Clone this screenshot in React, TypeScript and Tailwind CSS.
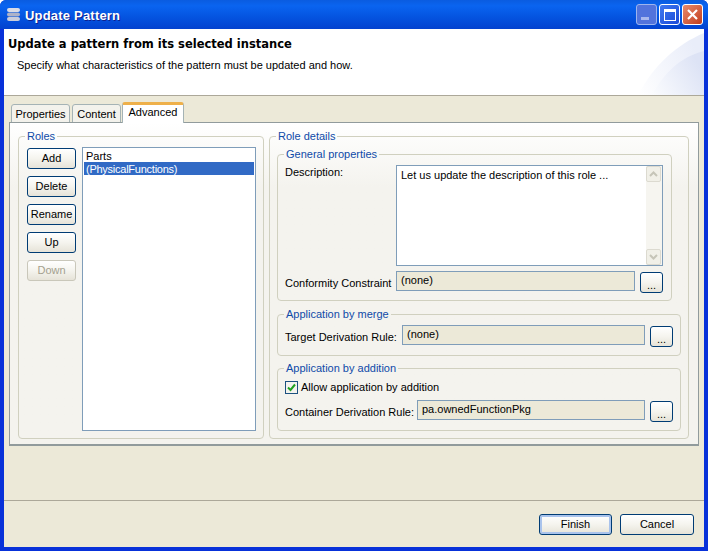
import React from "react";

const font = "font-['Liberation_Sans',sans-serif]";

const PushButton = ({ label, disabled, className = "" }: { label: string; disabled?: boolean; className?: string }) => (
  <button
    className={`flex items-center justify-center rounded-[3px] border text-[11px] leading-none bg-gradient-to-b from-white via-[#f5f4ee] to-[#e6e3d8] ${
      disabled ? "border-[#c9c7ba] text-[#a3a08e]" : "border-[#003c74] text-black"
    } ${className}`}
  >
    {label}
  </button>
);

const Group = ({ title, className = "", children }: { title: string; className?: string; children: React.ReactNode }) => (
  <fieldset className={`rounded-[4px] border border-[#d0d0bf] ${className}`}>
    <legend className="ml-[6px] px-[2px] text-[11px] leading-[14px] text-[#0f4aa8]">{title}</legend>
    {children}
  </fieldset>
);

const ReadOnlyField = ({ value, className = "" }: { value: string; className?: string }) => (
  <div className={`flex h-[20px] items-center border border-[#7f9db9] bg-[#ece9d8] pb-[1px] pl-[4px] text-[11px] ${className}`}>{value}</div>
);

const BrowseButton = () => (
  <button className="ml-[5px] mt-[1px] flex h-[21px] w-[23px] items-center justify-center rounded-[3px] border border-[#003c74] bg-gradient-to-b from-white via-[#f5f4ee] to-[#e6e3d8] pt-[5px] text-[11px] leading-none">
    ...
  </button>
);

const ScrollArrow = ({ up }: { up?: boolean }) => (
  <div className="flex h-[16px] w-[15px] items-center justify-center rounded-[2px] border border-[#dcdad0] bg-[#f1f0e8]">
    <svg width="9" height="6" viewBox="0 0 9 6" fill="none" stroke="#c6c5b8" strokeWidth="2">
      <path d={up ? "M1 5 L4.5 1.5 L8 5" : "M1 1 L4.5 4.5 L8 1"} />
    </svg>
  </div>
);

export default function App() {
  return (
    <div className={`${font} flex h-[551px] w-[708px] flex-col overflow-hidden rounded-t-[6px] bg-[#0831d9] text-black`}>
      {/* Title bar */}
      <div className="flex h-[29px] shrink-0 items-center bg-gradient-to-b from-[#0a5ce0] via-[#0a64f0] via-20% to-[#0342cf] pl-[6px] pr-[5px]">
        <svg width="15" height="15" viewBox="0 0 15 15">
          <rect x="1" y="1" width="13" height="4" rx="2" fill="#d9dbe6" />
          <rect x="1" y="5.5" width="13" height="4" rx="2" fill="#aeb2c8" />
          <rect x="1" y="10" width="13" height="4" rx="2" fill="#c9ccdb" />
        </svg>
        <span className="ml-[4px] pt-[3px] text-[13px] font-bold tracking-[0.2px] text-white [text-shadow:1px_1px_#0f1f8f]">
          Update Pattern
        </span>
        <div className="ml-auto flex gap-[2px]">
          <div className="flex h-[21px] w-[21px] items-end rounded-[3px] border border-[#9db4ee] bg-[#5273dc] pb-[4px] pl-[4px]">
            <div className="h-[3px] w-[8px] bg-[#a9b8ee]" />
          </div>
          <div className="flex h-[21px] w-[21px] items-center justify-center rounded-[3px] border border-white bg-gradient-to-br from-[#3f78f0] to-[#1c49d8]">
            <div className="h-[12px] w-[12px] border-[1.5px] border-t-[3px] border-white" />
          </div>
          <div className="flex h-[21px] w-[21px] items-center justify-center rounded-[3px] border border-white bg-gradient-to-br from-[#e88a6c] to-[#c23b18]">
            <svg width="13" height="13" viewBox="0 0 13 13" stroke="white" strokeWidth="2.2">
              <path d="M2 2 L11 11 M11 2 L2 11" />
            </svg>
          </div>
        </div>
      </div>

      <div className="mx-[4px] flex min-h-0 flex-1 flex-col bg-[#ece9d8]">
        {/* Banner */}
        <div className="relative h-[67px] shrink-0 border-b border-[#aca899] bg-white pl-[4px] pt-[7px]">
          <svg className="absolute bottom-0 right-0" width="70" height="66" viewBox="0 0 70 66">
            <defs>
              <linearGradient id="bannerA" x1="0" y1="1" x2="1" y2="0.5">
                <stop offset="0" stopColor="#ffffff" />
                <stop offset="1" stopColor="#e9edf9" />
              </linearGradient>
              <linearGradient id="bannerB" x1="0" y1="1" x2="1" y2="0.5">
                <stop offset="0" stopColor="#fbfcfe" />
                <stop offset="1" stopColor="#dde3f5" />
              </linearGradient>
            </defs>
            <path d="M70 4 C42 16 20 36 4 66 L70 66 Z" fill="url(#bannerA)" />
            <path d="M70 22 C46 28 30 44 18 66 L70 66 Z" fill="url(#bannerB)" />
          </svg>
          <h1 className="relative font-['DejaVu_Sans',sans-serif] text-[11.5px] font-bold leading-[16px]">Update a pattern from its selected instance</h1>
          <p className="relative ml-[9px] mt-[6px] text-[11px] leading-[14px]">Specify what characteristics of the pattern must be updated and how.</p>
        </div>

        {/* Tabs */}
        <div className="mt-[6px] flex items-end pl-[7px] text-[11px]">
          <div className="mb-[-1px] flex h-[19px] w-[59px] items-center justify-center rounded-t-[3px] border border-[#a5b3b5] bg-[#f3f2ec] pt-[1px]">Properties</div>
          <div className="mb-[-1px] ml-[2px] flex h-[19px] w-[49px] items-center justify-center rounded-t-[3px] border border-[#a5b3b5] bg-[#f3f2ec] pt-[1px]">Content</div>
          <div className="relative z-10 mb-[-1px] ml-[1px] flex h-[21px] w-[62px] items-center justify-center rounded-t-[3px] border-x border-[#a5b3b5] border-t-[3px] border-t-[#eeb04a] bg-white pb-[3px]">
            Advanced
          </div>
        </div>

        {/* Panel */}
        <div className="mx-[5px] flex h-[324px] gap-[5px] border border-[#919b9c] border-b-[2px] bg-gradient-to-b from-white to-[#f4f3ee] to-20% pl-[8px] pr-[9px] pt-[6px] text-[11px]">
          <Group title="Roles" className="h-[310px] w-[246px] shrink-0">
            <div className="flex pl-[8px] pt-[4px]">
              <div className="flex w-[49px] flex-col gap-[7px] pt-[1px]">
                <PushButton label="Add" className="h-[21px]" />
                <PushButton label="Delete" className="h-[21px]" />
                <PushButton label="Rename" className="h-[21px]" />
                <PushButton label="Up" className="h-[21px]" />
                <PushButton label="Down" disabled className="h-[21px]" />
              </div>
              <div className="ml-[6px] h-[284px] w-[174px] border border-[#7f9db9] bg-white p-[1px] leading-[15px]">
                <div className="h-[13px] pl-[2px]">Parts</div>
                <div className="h-[13px] bg-[#316ac5] pl-[2px] tracking-[-0.25px] text-white">(PhysicalFunctions)</div>
              </div>
            </div>
          </Group>

          <Group title="Role details" className="h-[310px] w-[420px] shrink-0">
            <div className="flex flex-col pl-[7px]">
              <Group title="General properties" className="mt-[4px] h-[154px] w-[394px]">
                <div className="mt-[4px] flex pl-[7px] pr-[8px]">
                  <span className="w-[111px] shrink-0 leading-[14px]">Description:</span>
                  <div className="flex h-[101px] w-[267px] border border-[#7f9db9] bg-white">
                    <div className="flex-1 pl-[4px] pt-[2px] leading-[14px]">Let us update the description of this role ...</div>
                    <div className="flex w-[16px] flex-col justify-between bg-[#f6f5f0]">
                      <ScrollArrow up />
                      <ScrollArrow />
                    </div>
                  </div>
                </div>
                <div className="mt-[5px] flex items-start pl-[7px]">
                  <span className="flex h-[24px] w-[111px] shrink-0 items-center">Conformity Constraint</span>
                  <ReadOnlyField value="(none)" className="w-[239px]" />
                  <BrowseButton />
                </div>
              </Group>

              <Group title="Application by merge" className="mt-[6px] h-[49px] w-[404px]">
                <div className="mt-[4px] flex items-start pl-[7px]">
                  <span className="flex h-[24px] w-[117px] shrink-0 items-center">Target Derivation Rule:</span>
                  <ReadOnlyField value="(none)" className="w-[243px]" />
                  <BrowseButton />
                </div>
              </Group>

              <Group title="Application by addition" className="mt-[5px] h-[70px] w-[404px]">
                <div className="mt-[6px] flex h-[14px] items-start pl-[7px]">
                  <span className="flex h-[13px] w-[13px] items-center justify-center border border-[#1c5180] bg-[#f4f3ee]">
                    <svg width="9" height="9" viewBox="0 0 9 9" fill="none" stroke="#21a121" strokeWidth="2">
                      <path d="M1 4.5 L3.5 7 L8 1.5" />
                    </svg>
                  </span>
                  <span className="ml-[3px] leading-[12px]">Allow application by addition</span>
                </div>
                <div className="mt-[5px] flex items-start pl-[7px]">
                  <span className="flex h-[24px] w-[132px] shrink-0 items-center">Container Derivation Rule:</span>
                  <ReadOnlyField value="pa.ownedFunctionPkg" className="w-[228px]" />
                  <BrowseButton />
                </div>
              </Group>
            </div>
          </Group>
        </div>

        {/* Footer */}
        <div className="mt-[54px] flex flex-1 items-start justify-end gap-[8px] border-t border-[#aca899] pr-[10px] pt-[13px] text-[11px]">
          <PushButton label="Finish" className="h-[21px] w-[73px] shadow-[inset_0_0_0_2px_#a9c3ec]" />
          <PushButton label="Cancel" className="h-[21px] w-[74px]" />
        </div>
      </div>
      <div className="h-[4px] shrink-0" />
    </div>
  );
}
